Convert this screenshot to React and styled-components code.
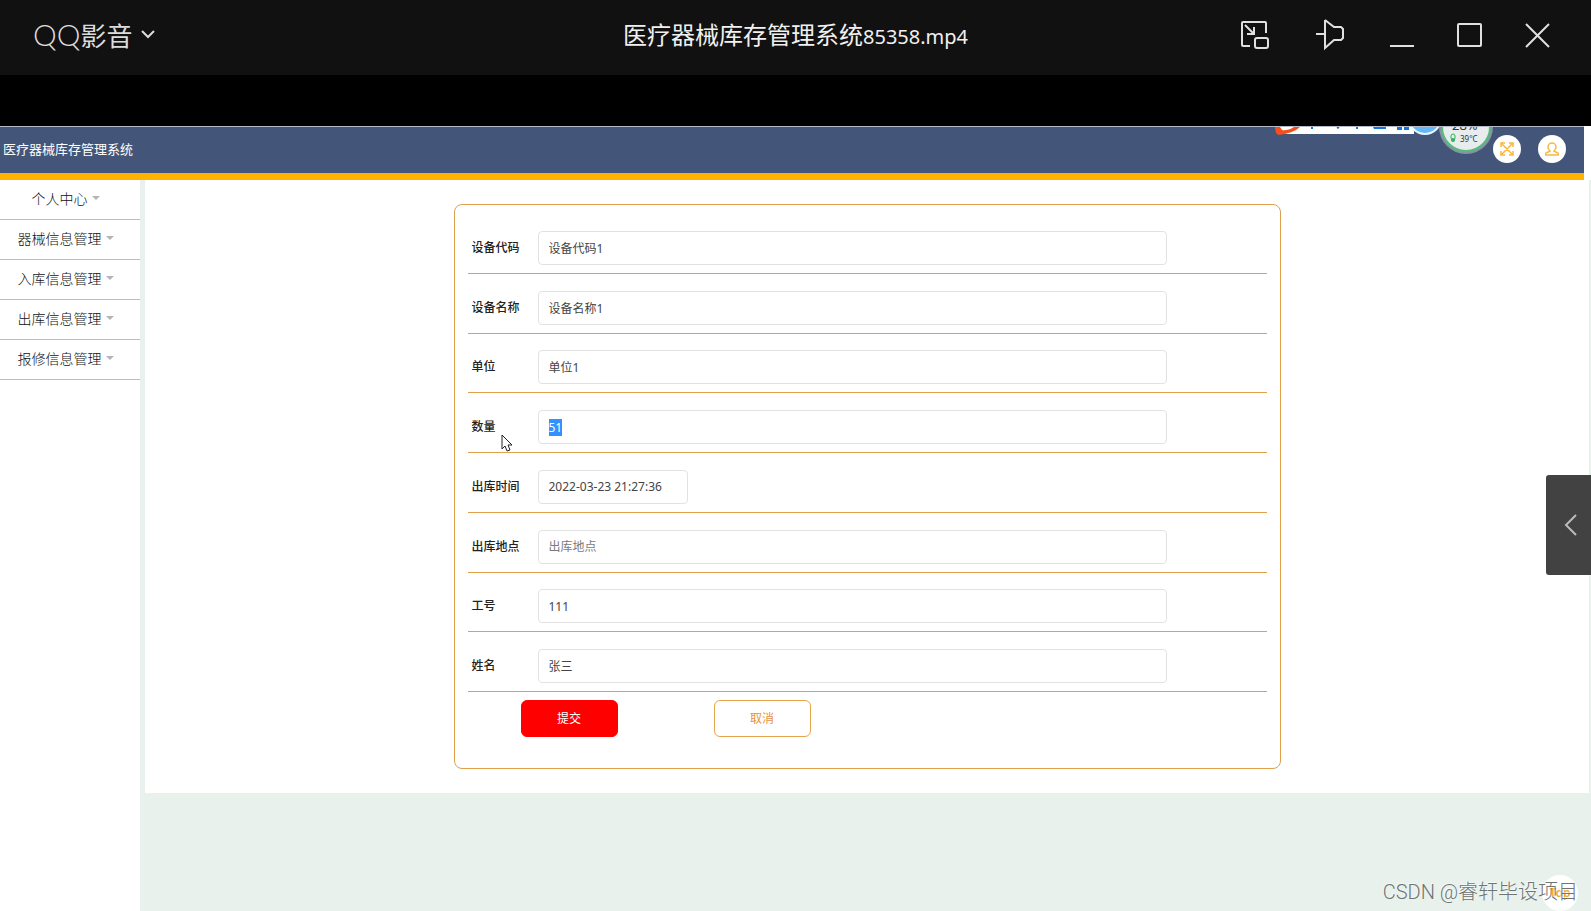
import React, { useEffect, useRef } from 'react';
import styled, { createGlobalStyle } from 'styled-components';

const GlobalStyle = createGlobalStyle`
  * {
    box-sizing: border-box;
  }
  body {
    margin: 0;
    background: #e8f1ec;
    font-family: 'Noto Sans', 'Noto Sans CJK SC', sans-serif;
    font-size: 12px;
    color: #333;
  }
  button, input {
    font: inherit;
  }
`;

const Player = styled.div`
  display: flex;
  flex-direction: column;
  min-height: 100vh;
  position: relative;
  overflow: hidden;
`;

const TitleBar = styled.header`
  display: grid;
  grid-template-columns: 1fr auto 1fr;
  align-items: center;
  height: 75px;
  padding: 0 33px;
  background: #111;
  color: #e6e6e6;
`;

const PlayerMenu = styled.button`
  justify-self: start;
  display: flex;
  align-items: center;
  gap: 8px;
  height: 40px;
  padding: 0;
  margin-bottom: 6px;
  border: 0;
  background: none;
  color: #dcdcdc;
  font-family: 'Noto Sans CJK SC', sans-serif;
  font-size: 26px;
  line-height: 40px;
`;

const BrandLatin = styled.span`
  font-family: Lato, sans-serif;
  font-size: 30px;
  font-weight: 300;
`;

const FileName = styled.h1`
  margin: 0 0 4px;
  font-family: 'Noto Sans CJK SC', sans-serif;
  font-size: 24px;
  font-weight: 400;
  line-height: 36px;
  color: #f0f0f0;
`;

const FileNameLatin = styled.span`
  font-family: 'Noto Sans', sans-serif;
  font-size: 20px;
`;

const WindowButtons = styled.div`
  justify-self: end;
  display: flex;
  gap: 28px;
  margin: 0 0 5px;
`;

const WindowButton = styled.button`
  display: flex;
  width: 40px;
  height: 40px;
  padding: 5px;
  margin-right: ${(props) => (props.$wide ? '6px' : '0')};
  border: 0;
  background: none;
  color: #e0e0e0;
`;

const Letterbox = styled.div`
  height: 51px;
  background: #000;
`;

const HeaderFrame = styled.div`
  background: #fff;
`;

const AppHeader = styled.div`
  position: relative;
  display: flex;
  align-items: center;
  justify-content: space-between;
  height: 54px;
  margin-right: 7px;
  padding: 0 18px 3px 3px;
  border-top: 1px solid #b4bccb;
  border-bottom: 7px solid #ffb300;
  background: #43567a;
  color: #fff;
`;

const SystemName = styled.span`
  font-size: 13px;
`;

const HeaderActions = styled.div`
  display: flex;
  gap: 17px;
`;

const RoundButton = styled.button`
  display: flex;
  align-items: center;
  justify-content: center;
  width: 28px;
  height: 28px;
  padding: 0;
  border: 0;
  border-radius: 50%;
  background: #fff;
  color: #fbb73c;
`;

const FloatingTools = styled.div`
  position: absolute;
  top: 0;
  right: 89px;
  width: 220px;
  height: 30px;
  overflow: hidden;
`;

const Body = styled.div`
  flex: 1;
  display: flex;
  gap: 5px;
`;

const SideMenu = styled.nav`
  width: 140px;
  background: #fff;
`;

const MenuItem = styled.button`
  display: flex;
  align-items: center;
  justify-content: center;
  gap: 4px;
  width: 100%;
  height: 40px;
  padding: 0 9px 3px 0;
  border: 0;
  border-bottom: 1px solid #efbb45;
  background: #fff;
  color: #111;
  font-size: 14px;
  font-weight: 300;
`;

const Caret = styled.span`
  border: 4px solid transparent;
  border-top-color: #b5b5b5;
  border-bottom: 0;
`;

const Content = styled.main`
  flex: 1;
  align-self: flex-start;
  margin-right: 2px;
  padding: 24px 16px;
  background: #fff;
`;

const FormCard = styled.form`
  width: 100%;
  max-width: 827px;
  margin: 0 auto;
  padding: 9px 13px 31px;
  border: 1px solid #e09f4a;
  border-radius: 8px;
`;

const Rows = styled.div`
  display: grid;
  grid-auto-rows: 1fr;
  min-height: 478px;
`;

const Row = styled.div`
  display: grid;
  grid-template-columns: 66px minmax(0, 1fr) 96px;
  align-items: end;
  padding: 0 4px 8px;
  border-bottom: 1px solid #e09f4a;
`;

const Label = styled.label`
  line-height: 34px;
  font-weight: 500;
  color: #222;
`;

const TextInput = styled.input`
  width: ${(props) => (props.$short ? '150px' : '100%')};
  height: 34px;
  padding: 0 10px;
  border: 1px solid #e2e2e2;
  border-radius: 4px;
  outline: none;
  background: #fff;
  color: #444;
  &::placeholder {
    color: #7a7a7a;
  }
  &::selection {
    background: #3390ff;
    color: #fff;
  }
`;

const Actions = styled.div`
  display: flex;
  gap: 96px;
  padding: 8px 53px 0;
`;

const ActionButton = styled.button`
  width: 97px;
  height: 37px;
  padding: 0 0 2px;
  border: 1px solid ${(props) => (props.$primary ? '#f00' : '#e5a54f')};
  border-radius: 6px;
  background: ${(props) => (props.$primary ? '#f00' : '#fff')};
  color: ${(props) => (props.$primary ? '#fff' : '#e8913a')};
`;

const DrawerHandle = styled.button`
  position: absolute;
  top: 475px;
  right: 0;
  width: 45px;
  height: 100px;
  padding: 4px 0 0 4px;
  border: 0;
  border-radius: 3px 0 0 3px;
  background: #424242;
  color: #bbb;
`;

const TopLink = styled.a`
  position: absolute;
  right: 13px;
  bottom: 0;
  width: 36px;
  height: 36px;
  border-radius: 50%;
  background: #fff;
  color: #f0a53c;
  font-weight: 600;
  line-height: 36px;
  text-align: center;
  text-decoration: none;
`;

const Watermark = styled.span`
  position: absolute;
  right: 13px;
  bottom: 4px;
  font-family: Roboto, 'Noto Sans CJK SC', sans-serif;
  font-size: 20px;
  font-weight: 300;
  line-height: 30px;
  color: #6f7371;
  text-shadow: -1px -1px 0 rgba(255, 255, 255, 0.6);
  pointer-events: none;
`;

const Pointer = styled.svg`
  position: absolute;
  top: 434px;
  left: 501px;
`;

const menus = ['个人中心', '器械信息管理', '入库信息管理', '出库信息管理', '报修信息管理'];

const fields = [
  { id: 'code', label: '设备代码', value: '设备代码1' },
  { id: 'name', label: '设备名称', value: '设备名称1' },
  { id: 'unit', label: '单位', value: '单位1' },
  { id: 'amount', label: '数量', value: '51' },
  { id: 'time', label: '出库时间', value: '2022-03-23 21:27:36', short: true },
  { id: 'place', label: '出库地点', value: '', placeholder: '出库地点' },
  { id: 'staff', label: '工号', value: '111' },
  { id: 'person', label: '姓名', value: '张三' },
];

const windowIcons = [
  {
    label: '迷你模式',
    wide: true,
    path: 'M11 26H4a1 1 0 0 1-1-1V3a1 1 0 0 1 1-1h22a1 1 0 0 1 1 1v10M6 5l9 9M15 7v7H8M18 18h9a2 2 0 0 1 2 2v6a2 2 0 0 1-2 2h-9a2 2 0 0 1-2-2v-6a2 2 0 0 1 2-2z',
  },
  { label: '置顶', wide: true, path: 'M3 14h9M12 0v28l9-8h7l2-2v-9l-2-2h-7L12 0' },
  { label: '最小化', path: 'M3 26h24' },
  { label: '最大化', path: 'M4 4h21a1 1 0 0 1 1 1v20a1 1 0 0 1-1 1H4a1 1 0 0 1-1-1V5a1 1 0 0 1 1-1z' },
  { label: '关闭', path: 'M3 4l23 23M26 4L3 27' },
];

function DesktopWidgets() {
  return (
    <FloatingTools>
      <svg width="220" height="30" aria-hidden="true">
        <path d="M2 0h137v7H6z" fill="#fff" />
        <path d="M0 0h25q-6 6-21 8-4-1-4-8z" fill="#f4501e" />
        <path d="M5 0h14Q12 4 7 3z" fill="#fff" />
        <path d="M37 0v2M62 1l2-1M82 0v2" stroke="#1474e0" strokeWidth="2" />
        <path d="M98 0h13v2H99zM122 0h5v3h-5zM129 0h5v3h-5z" fill="#1474e0" />
        <circle cx="150" cy="-9" r="16" fill="#63b8f5" stroke="#eaf6ff" strokeWidth="2" />
        <circle cx="191" cy="0" r="27" fill="#8792a5" />
        <circle cx="191" cy="0" r="24" fill="#e9ecec" stroke="#55bd7c" strokeWidth="2" />
        <text x="177" y="3" fontSize="13" fill="#333">28%</text>
        <text x="185" y="15" fontSize="8" fill="#333">39°C</text>
        <rect x="176" y="7" width="4" height="6" rx="2" fill="none" stroke="#2cb35e" />
        <circle cx="178" cy="13" r="2" fill="#2cb35e" />
      </svg>
    </FloatingTools>
  );
}

function App() {
  const amountRef = useRef(null);

  // The amount starts selected, ready to be overtyped
  useEffect(() => {
    amountRef.current.focus();
    amountRef.current.select();
  }, []);

  return (
    <Player>
      <GlobalStyle />
      <TitleBar>
        <PlayerMenu>
          <span><BrandLatin>QQ</BrandLatin>影音</span>
          <svg width="14" height="9" fill="none" stroke="currentColor" strokeWidth="2" aria-hidden="true">
            <path d="M1 1l6 6 6-6" />
          </svg>
        </PlayerMenu>
        <FileName>
          医疗器械库存管理系统<FileNameLatin>85358.mp4</FileNameLatin>
        </FileName>
        <WindowButtons>
          {windowIcons.map((icon) => (
            <WindowButton key={icon.label} aria-label={icon.label} $wide={icon.wide}>
              <svg width="30" height="30" fill="none" stroke="currentColor" strokeWidth="2" overflow="visible">
                <path d={icon.path} />
              </svg>
            </WindowButton>
          ))}
        </WindowButtons>
      </TitleBar>
      <Letterbox />

      <HeaderFrame>
        <AppHeader>
          <SystemName>医疗器械库存管理系统</SystemName>
          <DesktopWidgets />
          <HeaderActions>
            <RoundButton aria-label="全屏">
              <svg width="14" height="14" fill="none" stroke="currentColor" strokeWidth="1.5">
                <path d="M1 1l12 12M13 1L1 13M1 5V1h4M9 1h4v4M13 9v4H9M5 13H1V9" />
              </svg>
            </RoundButton>
            <RoundButton aria-label="用户">
              <svg width="14" height="14" fill="none" stroke="currentColor" strokeWidth="1.5">
                <path d="M5 9Q3 7 3 5a4 4 0 0 1 8 0q0 2-2 4l4 2q1 1 1 2H0q0-1 1-2l4-2z" />
              </svg>
            </RoundButton>
          </HeaderActions>
        </AppHeader>
      </HeaderFrame>

      <Body>
        <SideMenu>
          {menus.map((menu) => (
            <MenuItem key={menu}>
              {menu}
              <Caret />
            </MenuItem>
          ))}
        </SideMenu>
        <Content>
          <FormCard onSubmit={(e) => e.preventDefault()}>
            <Rows>
              {fields.map((field) => (
                <Row key={field.id}>
                  <Label htmlFor={field.id}>{field.label}</Label>
                  <TextInput
                    id={field.id}
                    ref={field.id === 'amount' ? amountRef : null}
                    defaultValue={field.value}
                    placeholder={field.placeholder}
                    $short={field.short}
                  />
                </Row>
              ))}
            </Rows>
            <Actions>
              <ActionButton type="submit" $primary>提交</ActionButton>
              <ActionButton type="button">取消</ActionButton>
            </Actions>
          </FormCard>
        </Content>
      </Body>

      <DrawerHandle aria-label="展开列表">
        <svg width="14" height="22" fill="none" stroke="currentColor" strokeWidth="2">
          <path d="M12 1L2 11l10 10" />
        </svg>
      </DrawerHandle>
      <Pointer width="12" height="18" fill="#fff" stroke="#222">
        <path d="M1 1v14l3-3 2 5 3-1-2-5h4z" />
      </Pointer>
      <TopLink href="#top">Top</TopLink>
      <Watermark>CSDN @睿轩毕设项目</Watermark>
    </Player>
  );
}

export default App;
